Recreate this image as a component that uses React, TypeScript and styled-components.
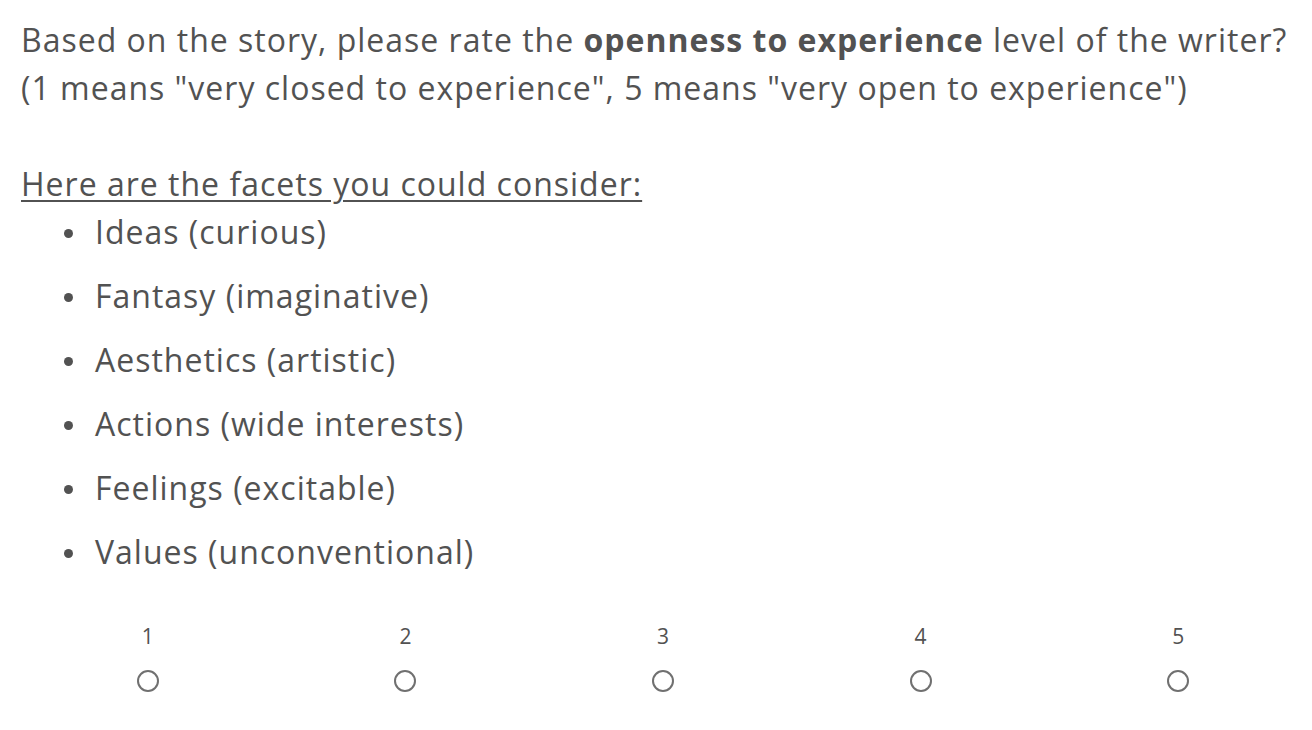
import { createGlobalStyle, styled } from "styled-components";

const GlobalStyle = createGlobalStyle`
	html, body {
		margin: 0;
		padding: 0;
		background: #fff;
	}
	body {
		font-family: "Open Sans", "Liberation Sans", sans-serif;
		color: #525252;
	}
`;

const Page = styled.main`
	padding: 16px 0 0 21px;
	width: 1290px;
`;

const Question = styled.div`
	font-size: 32px;
	line-height: 48px;
	letter-spacing: 1px;
`;

const Line = styled.p`
	margin: 0;
	min-height: 48px;
`;

const Heading = styled.p`
	margin: 0;
	text-decoration: underline;
	text-underline-offset: 4px;
	text-decoration-thickness: 2px;
`;

const Facets = styled.ul`
	margin: 0;
	padding-left: 43px;
	list-style: none;
`;

const Facet = styled.li`
	display: flex;
	align-items: center;
	gap: 22px;
	& + & {
		margin-top: 16px;
	}
`;

const Bullet = styled.span`
	width: 9px;
	height: 9px;
	border-radius: 50%;
	background: #525252;
	flex: none;
	margin-top: 2px;
`;

const Scale = styled.div`
	display: grid;
	grid-template-columns: repeat(5, 1fr);
	width: 1288px;
	margin-top: 48px;
	margin-left: -2px;
`;

const Choice = styled.label`
	display: flex;
	flex-direction: column;
	align-items: center;
	gap: 22px;
	font-size: 21px;
	line-height: 24px;
	color: #525252;
	cursor: pointer;
`;

const Radio = styled.span`
	display: block;
	width: 22px;
	height: 22px;
	box-sizing: border-box;
	border: 2px solid #707070;
	border-radius: 50%;
`;

const facets = [
	"Ideas (curious)",
	"Fantasy (imaginative)",
	"Aesthetics (artistic)",
	"Actions (wide interests)",
	"Feelings (excitable)",
	"Values (unconventional)",
];

function App() {
	return (
		<Page>
			<GlobalStyle />
			<Question>
				<Line>
					Based on the story, please rate the <b>openness to experience</b> level of the
					writer?
				</Line>
				<Line>(1 means "very closed to experience", 5 means "very open to experience")</Line>
				<Line />
				<Heading>Here are the facets you could consider:</Heading>
				<Facets>
					{facets.map((f) => (
						<Facet key={f}>
							<Bullet />
							<span>{f}</span>
						</Facet>
					))}
				</Facets>
			</Question>
			<Scale>
				{[1, 2, 3, 4, 5].map((n) => (
					<Choice key={n}>
						<span>{n}</span>
						<Radio />
					</Choice>
				))}
			</Scale>
		</Page>
	);
}

export default App;
